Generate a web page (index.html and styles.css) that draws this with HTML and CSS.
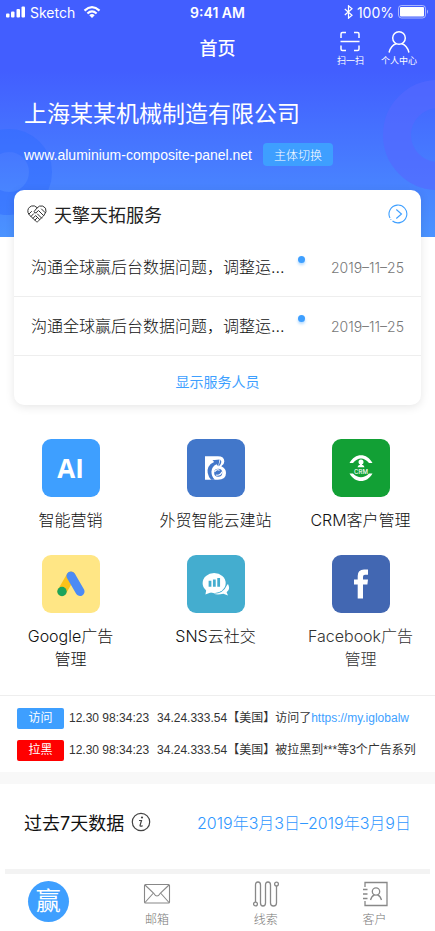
FILE: index.html
```html
<!DOCTYPE html>
<html lang="zh-CN">
<head>
<meta charset="utf-8">
<meta name="viewport" content="width=device-width, initial-scale=1">
<title>首页</title>
<link rel="stylesheet" href="styles.css">
</head>
<body>
<div class="hero">
  <svg class="ring ring-left" viewBox="0 0 86 86" aria-hidden="true"><circle cx="43" cy="43" r="31.5" fill="none" stroke="#2f6cff" stroke-opacity=".5" stroke-width="23"/></svg>
  <svg class="ring ring-right" viewBox="0 0 110 110" aria-hidden="true"><circle cx="55" cy="55" r="41" fill="none" stroke="#5468ff" stroke-opacity=".65" stroke-width="28"/></svg>
  <div class="status">
    <div class="status-side">
      <svg width="20" height="12" viewBox="0 0 20 12" fill="#fff" aria-hidden="true"><rect x="0" y="7.500" width="3.500" height="4" rx="1"/><rect x="5" y="5.500" width="3.500" height="6" rx="1"/><rect x="10.500" y="3" width="3.500" height="8.500" rx="1"/><rect x="15.500" y="0.500" width="3.500" height="11" rx="1"/></svg>
      <span>Sketch</span>
      <svg class="wifi" width="18" height="12" viewBox="0 0 18 12" fill="none" stroke="#fff" stroke-width="2.200" aria-hidden="true"><path d="M1.500 4.600Q9-2.200 16.500 4.600M4.400 7.500Q9 3.400 13.600 7.500"/><path d="M6.300 9.200Q9 7 11.700 9.200L9 11.900Z" fill="#fff" stroke="none"/></svg>
    </div>
    <span class="time">9:41 AM</span>
    <div class="status-side status-right">
      <svg width="9" height="14" viewBox="0 0 9 14" fill="none" stroke="#fff" stroke-width="1.200" aria-hidden="true"><path d="M.8 4L8 10.200 4.500 13.200V.8L8 3.800 .8 10"/></svg>
      <span>100%</span>
      <svg width="31" height="14" viewBox="0 0 31 14" aria-hidden="true"><rect x=".5" y=".5" width="27" height="12.500" rx="3" fill="none" stroke="#fff" stroke-opacity=".55"/><rect x="2" y="2" width="24" height="9.500" rx="1" fill="#fff"/><path d="M29 4.500Q31 6.700 29 9Z" fill="#fff" fill-opacity=".6"/></svg>
    </div>
  </div>
  <header class="nav">
    <h1>首页</h1>
    <div class="nav-actions">
      <a href="#scan"><svg width="24" height="24" viewBox="0 0 24 24" fill="none" stroke="#fff" stroke-width="1.500" aria-hidden="true"><path d="M3 8V4Q3 2.500 4.500 2.500H8M16 2.500H19.500Q21 2.500 21 4V8M3 15.500V19Q3 20.500 4.500 20.500H8M16 20.500H19.500Q21 20.500 21 19V15.500M2.500 11.500H21.500"/></svg><span>扫一扫</span></a>
      <a href="#me"><svg width="24" height="24" viewBox="0 0 24 24" fill="none" stroke="#fff" stroke-width="1.500" stroke-linecap="round" aria-hidden="true"><circle cx="12" cy="8" r="6.300"/><path d="M2.200 22Q4 15.500 9 13.700M21.800 22Q20 15.500 15 13.700"/></svg><span>个人中心</span></a>
    </div>
  </header>
  <section class="company">
    <h2>上海某某机械制造有限公司</h2>
    <div class="site"><span>www.aluminium-composite-panel.net</span><button type="button">主体切换</button></div>
  </section>
</div>

<main>
  <section class="card">
    <div class="card-head">
      <svg width="20" height="18" viewBox="0 0 20 18" fill="none" stroke="#333" stroke-width="1" stroke-linejoin="round" stroke-linecap="round" aria-hidden="true"><path d="M10 2.500Q7.500 0 4.500 1 0 3 1 7.500 1.800 10 4 11.500L9.500 16.700Q10.500 17.300 11.300 16L16.500 11Q20.500 6.500 18.500 3.200 16 0 12.500 1.100 10 2.400 7.200 6.400 7 8.300 9 7.800L11.500 5.500 16.500 10.500M2 9L4.500 6.500M4 11.500L6.500 8.800M6 13.300L8.500 10.700M8 15L10.500 12.500M10.500 9L14.500 13M9 11L12.700 14.600M14.500 4L18 7.500"/></svg>
      <h3>天擎天拓服务</h3>
      <a class="more" href="#services" aria-label="更多"><svg width="20" height="20" viewBox="0 0 20 20" fill="none" stroke="#3e9fff" stroke-width="1.100" aria-hidden="true"><path d="M4.500 17A8.900 8.900 0 1 0 2 14"/><path d="M8.300 5.500L13.500 10 8.300 14.500"/><circle cx="2.900" cy="15.500" r=".5" fill="#3e9fff" stroke="none"/></svg></a>
    </div>
    <ul class="notices">
      <li><a href="#n1">沟通全球赢后台数据问题，调整运…</a><i class="dot"></i><time>2019–11–25</time></li>
      <li><a href="#n2">沟通全球赢后台数据问题，调整运…</a><i class="dot"></i><time>2019–11–25</time></li>
    </ul>
    <button class="show-staff" type="button">显示服务人员</button>
  </section>

  <nav class="apps" aria-label="应用">
    <a href="#ai"><span class="tile ai">AI</span><span class="label">智能营销</span></a>
    <a href="#site"><span class="tile build"><svg width="21" height="24" viewBox="0 0 62 70" aria-hidden="true"><path d="M0 0H38Q57 0 57 16 57 25 48 30 62 36 62 50 62 70 38 70H0Z" fill="#fff"/><path d="M18 70Q2 50 10 32 15 21 27 17L22 12 43 10 39 30 34 24Q20 30 19 46 19 60 29 70Z" fill="#4277ca"/><circle cx="39" cy="49" r="12" fill="#4277ca"/><path d="M28 47Q36 36 43 42M32 56Q46 58 50 46" stroke="#fff" stroke-width="3" fill="none"/><path d="M46 10Q51 18 44 27L40 30Z" fill="#4277ca"/></svg></span><span class="label">外贸智能云建站</span></a>
    <a href="#crm"><span class="tile crm"><svg width="24" height="27" viewBox="0 0 24 27" aria-hidden="true"><path d="M.5 8C6-2.500 18-2.500 23.500 8H20C15 2 9 2 4 8ZM.5 18.500H4C9 23.500 15 23.500 20 18.500H23.500C18 28.500 6 28.500 .5 18.500Z" fill="#fff"/><circle cx="12" cy="7" r="2.500" fill="#fff"/><path d="M8.500 12.300Q9 10 11 9.800V9H13V9.800Q15 10 15.500 12.300Z" fill="#fff"/><text x="12" y="19" text-anchor="middle" class="crm-text">CRM</text></svg></span><span class="label">CRM客户管理</span></a>
    <a href="#google"><span class="tile google"><svg width="28" height="26" viewBox="0 0 28 26" aria-hidden="true"><path d="M5 20.500L14 5" stroke="#fbc21b" stroke-width="9" stroke-linecap="round"/><path d="M14 5L23 20.500" stroke="#4c8bf5" stroke-width="9" stroke-linecap="round"/><circle cx="5" cy="20.500" r="4.700" fill="#1ca45c"/></svg></span><span class="label">Google广告<br>管理</span></a>
    <a href="#sns"><span class="tile sns"><svg width="28" height="24" viewBox="0 0 30 26" aria-hidden="true"><ellipse cx="13" cy="12" rx="12.500" ry="11" fill="#fff"/><path d="M5 17L3.500 24.500 12 21Z" fill="#fff"/><path d="M28 13Q31 19 26.500 22L28 25.500 23 23.600Q16 25 12.500 23.500 23 23.500 27 14Z" fill="#fff"/><path d="M7 9.500H10V16H7ZM11.700 8H14.700V16H11.700ZM16.400 6.500H19.400V16H16.400Z" fill="#44adcf"/></svg></span><span class="label">SNS云社交</span></a>
    <a href="#facebook"><span class="tile facebook"><svg width="16" height="30" viewBox="0 0 16 30" aria-hidden="true"><path d="M4.700 29.500V15.500H1V10.500H4.700V7Q4.700.5 11 .5H15V5.700H12Q10 5.700 10 7.800V10.500H15L14.400 15.500H10V29.500Z" fill="#fff"/></svg></span><span class="label soft">Facebook广告<br>管理</span></a>
  </nav>

  <section class="logs">
    <p><span class="tag">访问</span><span class="stamp">12.30 98:34:23</span><span>34.24.333.54【美国】访问了<a href="#visit">https://my.iglobalw</a></span></p>
    <p><span class="tag block">拉黑</span><span class="stamp">12.30 98:34:23</span><span>34.24.333.54【美国】被拉黑到***等3个广告系列</span></p>
  </section>

  <section class="period">
    <h3>过去7天数据</h3>
    <svg width="20" height="20" viewBox="0 0 20 20" fill="none" stroke="#444" aria-hidden="true"><circle cx="10" cy="10" r="8.700" stroke-width="1.200"/><circle cx="11" cy="5.500" r="1.100" fill="#444" stroke="none"/><path d="M8 8.500H10.500L9 13.500Q9 14.800 11.700 13.700" stroke-width="1.200"/></svg>
    <button type="button">2019年3月3日–2019年3月9日</button>
  </section>
</main>

<nav class="tabs" aria-label="主导航">
  <a href="#home" aria-label="首页"><span class="home">赢</span></a>
  <a href="#mail"><svg width="28" height="28" viewBox="0 0 28 28" fill="none" stroke="#888" stroke-width="1.100" aria-hidden="true"><rect x="1.500" y="4.500" width="25" height="18.500" rx="1"/><path d="M2 5L10.500 13Q14 19 17.500 13L26 5M2 22.500L10 13.500M26 22.500L18 13.500"/></svg><span>邮箱</span></a>
  <a href="#leads"><svg width="28" height="28" viewBox="0 0 28 28" fill="none" stroke="#888" stroke-width="1.300" aria-hidden="true"><circle cx="3.500" cy="24" r="1.900"/><circle cx="24.500" cy="4" r="1.900"/><path d="M3.500 22V5Q3.500 2 6 2T8.500 5V23Q8.500 26 11 26T13.500 23V5Q13.500 2 16 2T18.500 5V23Q18.500 26 21.500 26T24.500 23V6"/></svg><span>线索</span></a>
  <a href="#clients"><svg width="28" height="28" viewBox="0 0 28 28" fill="none" stroke="#888" stroke-width="1.300" aria-hidden="true"><path d="M4 7V2.500H26V25.500H4V21M2 9.500H6.500M2 14H6.500M2 18.500H6.500"/><circle cx="15" cy="11.500" r="3.700"/><path d="M9.500 20Q10.500 16 13.500 14.800M20.500 20Q19.500 16 16.500 14.800"/></svg><span>客户</span></a>
</nav>
</body>
</html>
```

FILE: styles.css
```css
* { box-sizing: border-box; }

body {
  margin: 0;
  background: #fff;
  color: #111;
  font-family: Inter, "Noto Sans CJK SC", sans-serif;
  font-weight: 300;
}

h1, h2, h3, p, ul { margin: 0; padding: 0; }
h1, h2, h3 { font-weight: 400; }
a { color: inherit; text-decoration: none; }
button { border: 0; padding: 0; background: none; font: inherit; color: inherit; cursor: pointer; }
svg { display: block; flex: none; }

.hero {
  position: relative;
  overflow: hidden;
  height: 237px;
  color: #fff;
  background: linear-gradient(#425eff 0, #425eff 70px, #4b93ff 100%);
}

.ring { position: absolute; }
.ring-left { left: -34px; top: 129px; width: 86px; }
.ring-right { right: -58px; top: 80px; width: 110px; }

.status {
  position: relative;
  display: flex;
  align-items: center;
  height: 24px;
  padding: 0 6px;
  font-size: 14px;
  font-weight: 400;
}
.status-side { display: flex; flex: 1; align-items: center; gap: 4px; }
.status-right { justify-content: flex-end; }
.wifi { margin-left: 4px; }
.time { font-weight: 600; }

.nav {
  position: relative;
  display: flex;
  justify-content: center;
  height: 50px;
}
.nav h1 { font-size: 18px; line-height: 50px; font-weight: 500; }
.nav-actions {
  position: absolute;
  top: 6px;
  right: 18px;
  display: flex;
  gap: 17px;
  font-size: 9px;
  line-height: 13px;
  font-weight: 400;
}
.nav-actions a { display: flex; flex-direction: column; align-items: center; }

.company { position: relative; padding: 23px 24px 0; }
.company h2 { font-size: 23px; line-height: 34px; }
.site { display: flex; align-items: center; gap: 11px; margin-top: 12px; font-family: "Liberation Sans", "Noto Sans CJK SC", sans-serif; font-size: 14px; }
.site button { width: 70px; height: 23px; border-radius: 4px; background: #3e9fff; font-size: 12px; }

.card {
  position: relative;
  margin: -47px 14px 0;
  border-radius: 10px;
  background: #fff;
  box-shadow: 0 2px 10px rgba(0, 0, 0, .1);
}
.card-head { display: flex; align-items: center; gap: 7px; height: 48px; padding: 0 13px; }
.card-head h3 { color: #222; font-size: 18px; }
.more { margin-left: auto; }
.notices { list-style: none; }
.notices li {
  display: flex;
  align-items: center;
  height: 59px;
  padding: 0 17px;
  border-bottom: 1px solid #eee;
}
.notices a { flex: 1; white-space: nowrap; font-size: 16px; line-height: 24px; }
.notices time { font-size: 14px; color: #777; }
.dot { align-self: flex-start; width: 7px; height: 7px; margin: 18px 26px 0 2px; border-radius: 50%; background: #3e9fff; box-shadow: 0 2px 3px rgba(62, 159, 255, .4); }
.show-staff { display: block; width: 100%; height: 49px; color: #3e9fff; font-size: 14px; font-weight: 400; }

.apps {
  display: grid;
  grid-template-columns: repeat(3, 1fr);
  row-gap: 23px;
  padding: 34px 0 24px;
  margin: 0 2px 0 -2px;
}
.apps a { display: flex; flex-direction: column; align-items: center; gap: 12px; }
.tile { display: grid; place-items: center; width: 58px; height: 58px; border-radius: 9px; color: #fff; }
.ai { background: #3e9fff; font: 700 26px "Open Sans", sans-serif; }
.build { background: #4277ca; }
.crm { background: #12a035; }
.google { background: #ffe685; }
.sns { background: #44adcf; }
.facebook { background: #4267b2; }
.crm-text { fill: #fff; font: 500 6px Inter, sans-serif; }
.label { font-size: 16px; line-height: 23px; text-align: center; }
.soft { color: #333; }

.logs {
  display: grid;
  gap: 11px;
  padding: 12px 17px 11px;
  border-top: 1px solid #eee;
  border-bottom: 12px solid #f8f8f8;
  color: #333;
  font-family: "Liberation Sans", "Noto Sans CJK SC", sans-serif;
  font-size: 12px;
  font-weight: 400;
  white-space: nowrap;
}
.logs p { display: flex; align-items: center; line-height: 21px; }
.logs a { color: #3e9fff; }
.tag { width: 47px; height: 21px; margin-right: 5px; border-radius: 2px; background: #3e9fff; color: #fff; text-align: center; }
.block { background: #f00; }
.stamp { margin-right: 8px; }

.period { display: flex; align-items: center; gap: 7px; height: 76px; padding: 0 24px; }
.period h3 { font-size: 18px; }
.period button { margin-left: auto; color: #2f97ff; font-size: 16px; }

.tabs {
  display: grid;
  grid-template-columns: repeat(4, 1fr);
  row-gap: 6px;
  margin-top: 9px;
  color: #777;
  font-size: 12px;
  line-height: 18px;
}
.tabs::before { content: ""; grid-column: 1 / -1; height: 5px; margin: 0 5px; background: #f3f3f3; }
.tabs a { display: flex; flex-direction: column; align-items: center; gap: 3px; padding-right: 12px; }
.home { display: grid; place-items: center; width: 41px; height: 41px; margin-top: 1px; border-radius: 50%; background: #3e9fff; color: #fff; font-size: 25px; font-weight: 400; line-height: 41px; }
```
